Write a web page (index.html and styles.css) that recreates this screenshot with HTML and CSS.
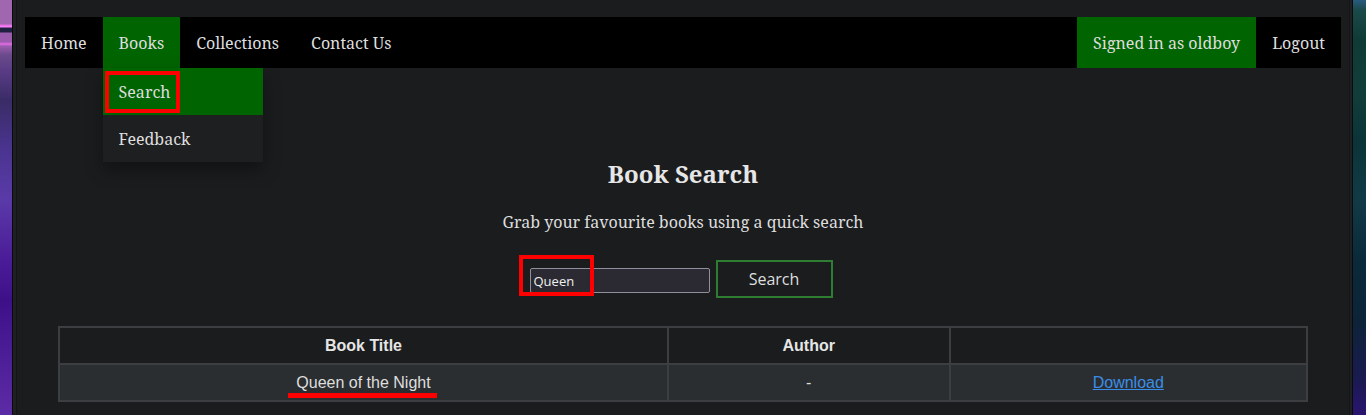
FILE: index.html
```html
<!DOCTYPE html>
<html lang="en">
<head>
<meta charset="utf-8">
<title>Book Search</title>
<link rel="stylesheet" href="styles.css">
</head>
<body>
<div class="desk">
  <div class="wall wall-left"></div>
  <div class="frame frame-left"></div>
  <div class="page">
    <nav class="topnav">
      <ul class="menu">
        <li class="item"><a href="#">Home</a></li>
        <li class="item active has-drop">
          <a href="#">Books</a>
          <ul class="drop">
            <li class="drop-item current"><a href="#">Search</a><span class="annot annot-search"></span></li>
            <li class="drop-item"><a href="#">Feedback</a></li>
          </ul>
        </li>
        <li class="item"><a href="#">Collections</a></li>
        <li class="item"><a href="#">Contact Us</a></li>
      </ul>
      <ul class="menu">
        <li class="item active"><a href="#">Signed in as oldboy</a></li>
        <li class="item"><a href="#">Logout</a></li>
      </ul>
    </nav>

    <main class="content">
      <h2 class="title">Book Search</h2>
      <p class="lead">Grab your favourite books using a quick search</p>
      <form class="search" onsubmit="return false">
        <div class="field">
          <input class="query" type="text" value="Queen">
          <span class="annot annot-input"></span>
        </div>
        <button class="btn" type="submit">Search</button>
      </form>

      <table class="results">
        <colgroup>
          <col class="c1"><col class="c2"><col class="c3">
        </colgroup>
        <thead>
          <tr><th>Book Title</th><th>Author</th><th></th></tr>
        </thead>
        <tbody>
          <tr>
            <td><span class="marked">Queen of the Night</span></td>
            <td>-</td>
            <td><a class="dl" href="#">Download</a></td>
          </tr>
        </tbody>
      </table>
    </main>
  </div>
  <div class="frame frame-right"></div>
  <div class="wall wall-right"></div>
</div>
</body>
</html>
```
FILE: styles.css
```css
* { box-sizing: border-box; }

html, body {
  margin: 0;
  padding: 0;
  height: 415px;
  overflow: hidden;
  background: #1b1c1e;
}

.desk {
  display: flex;
  height: 415px;
}

.wall { flex: none; }

.wall-left {
  width: 12px;
  background: linear-gradient(180deg,
    #a066b0 0px, #a066b0 24px, #e070e0 25px, #ff80ff 27px, #202040 28px, #202040 32px,
    #9c5cae 33px, #9c5cae 42px, #e66ee6 44px, #9c5cae 46px, #6a4a8a 55px,
    #5a3c86 70px, #3a2c66 100px, #4a3490 150px, #5a3aa8 200px, #4b1c98 260px,
    #3e1088 300px, #4a1c96 350px, #5c2ca6 415px);
}

.wall-right {
  width: 13px;
  background: linear-gradient(180deg,
    #2a5a80 0px, #1a4a4a 10px, #0e3b35 40px, #113e3a 90px, #0b3438 140px,
    #123a46 200px, #0a2a3a 260px, #0c2438 320px, #1a1a50 380px, #2a1470 415px);
}

.frame {
  flex: none;
  background: #1f2023;
}
.frame-left {
  width: 5px;
  border-left: 1px solid #0b0b0c;
  border-right: 1px solid #141517;
}
.frame-right {
  width: 4px;
  border-left: 1px solid #141517;
  border-right: 1px solid #0b0b0c;
}

.page {
  flex: 1;
  padding: 17px 8px 0;
  font-family: "Noto Serif", "DejaVu Serif", serif;
  font-size: 16px;
  color: #dedede;
}

/* ---------- navigation ---------- */
.topnav {
  display: flex;
  justify-content: space-between;
  background: #000;
  height: 51px;
}

.menu {
  display: flex;
  margin: 0;
  padding: 0;
  list-style: none;
}

.item { position: relative; }

.item > a {
  display: block;
  padding: 15px 16px 13px;
  line-height: 23px;
  color: #dedede;
  text-decoration: none;
}

.item.active { background: #006400; }

.drop {
  position: absolute;
  top: 51px;
  left: 0;
  width: 160px;
  margin: 0;
  padding: 0;
  list-style: none;
  background: #1e1f21;
  box-shadow: 0 8px 16px rgba(0, 0, 0, 0.35);
  z-index: 5;
}

.drop-item {
  position: relative;
}

.drop-item a {
  display: block;
  padding: 13px 16px 11px;
  line-height: 23px;
  color: #dedede;
  text-decoration: none;
}

.drop-item.current { background: #006400; }

/* ---------- annotations ---------- */
.annot {
  position: absolute;
  border: 4px solid #ff0000;
  pointer-events: none;
}

.annot-search {
  left: 2px;
  top: 3px;
  width: 75px;
  height: 42px;
}

.annot-input {
  left: -11px;
  top: -11px;
  width: 75px;
  height: 41px;
}

.marked { position: relative; }
.marked::after {
  content: "";
  position: absolute;
  left: -8px;
  right: -6px;
  bottom: -7px;
  height: 5px;
  background: #ff0000;
}

/* ---------- content ---------- */
.content {
  display: flex;
  flex-direction: column;
  align-items: center;
}

.title {
  margin: 90px 0 0;
  font-size: 24px;
  line-height: 32px;
  font-weight: 700;
  color: #e6e6e6;
}

.lead {
  margin: 21px 0 0;
  line-height: 22px;
}

.search {
  display: flex;
  align-items: center;
  gap: 6px;
  margin: 27px 4px 0 0;
}

.field { position: relative; }

.query {
  display: block;
  width: 180px;
  height: 25px;
  margin: 2px 0 0;
  padding: 1px 3px 0;
  background: #2b2a33;
  border: 1px solid #8f8f9d;
  border-radius: 2px;
  color: #f0f0f0;
  font-family: "Open Sans", "Noto Sans", sans-serif;
  font-size: 13px;
}

.btn {
  width: 117px;
  height: 38px;
  background: transparent;
  border: 2px solid #2e7d32;
  color: #dedede;
  font-family: "Open Sans", "Noto Sans", sans-serif;
  font-size: 16px;
  padding: 0;
}

.results {
  width: 1250px;
  margin-top: 28px;
  border-collapse: collapse;
  border: 2px solid #3c3e41;
  font-family: "Liberation Sans", Arial, sans-serif;
  font-size: 16px;
  color: #e0e0e0;
}

.c1 { width: 610px; }
.c2 { width: 282px; }
.c3 { width: 358px; }

.results th,
.results td {
  border: 2px solid #3c3e41;
  text-align: center;
  height: 37px;
  padding: 1px 8px 0;
}

.results th {
  background: #1b1c1e;
  font-weight: 700;
  color: #e6e6e6;
}

.results td {
  background: #2b2e31;
  color: #dedede;
}

.dl {
  color: #3a8ee8;
  text-decoration: underline;
}
```
